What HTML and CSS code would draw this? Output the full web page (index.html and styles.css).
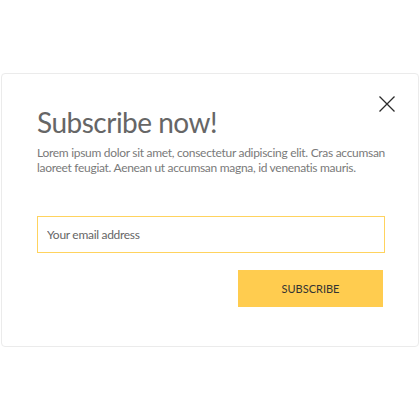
FILE: index.html
```html
<!DOCTYPE html>
<html>
<head>
<meta charset="utf-8">
<link rel="stylesheet" href="styles.css">
</head>
<body>
<div class="card">
  <button class="close" aria-label="Close">
    <svg width="16" height="16" viewBox="0 0 16 16"><path d="M0.5 0.5L15.5 15.5M15.5 0.5L0.5 15.5" stroke="#2b2b2b" stroke-width="1.3" fill="none"/></svg>
  </button>
  <h1 class="title">Subscribe now!</h1>
  <p class="text">Lorem ipsum dolor sit amet, consectetur adipiscing elit. Cras accumsan laoreet feugiat. Aenean ut accumsan magna, id venenatis mauris.</p>
  <form class="form">
    <input class="email" type="text" placeholder="Your email address">
    <div class="actions"><button class="submit" type="button">SUBSCRIBE</button></div>
  </form>
</div>
</body>
</html>
```
FILE: styles.css
```css
html, body { margin: 0; padding: 0; background: #fff; }
body { font-family: Lato, "Open Sans", sans-serif; }
.card {
  position: relative;
  box-sizing: border-box;
  margin: 73px 0 0 1px;
  width: 418px;
  height: 274px;
  border: 1px solid #ebebeb;
  border-radius: 4px;
  padding: 30px 33px 0 35px;
  background: #fff;
}
.close {
  position: absolute;
  top: 22px;
  right: 23px;
  width: 16px;
  height: 16px;
  padding: 0;
  border: 0;
  background: none;
  line-height: 0;
}
.title {
  margin: 0;
  font-size: 28px;
  font-weight: 400;
  letter-spacing: -0.5px;
  color: #666;
  line-height: 36px;
}
.text {
  margin: 5px 0 0;
  font-size: 12px;
  letter-spacing: -0.3px;
  line-height: 15px;
  color: #7a7a7a;
}
.form { margin-top: 41px; }
.email {
  display: block;
  box-sizing: border-box;
  width: 100%;
  height: 37px;
  border: 1px solid #ffd35e;
  padding: 0 9px;
  font-family: inherit;
  font-size: 12px;
  letter-spacing: -0.3px;
  color: #555;
  outline: none;
}
.email::placeholder { color: #666; }
.actions { display: flex; justify-content: flex-end; margin-top: 17px; padding-right: 2px; }
.submit {
  width: 145px;
  height: 37px;
  border: 0;
  background: #ffcc4f;
  font-family: inherit;
  font-size: 11px;
  color: #333;
}
```
